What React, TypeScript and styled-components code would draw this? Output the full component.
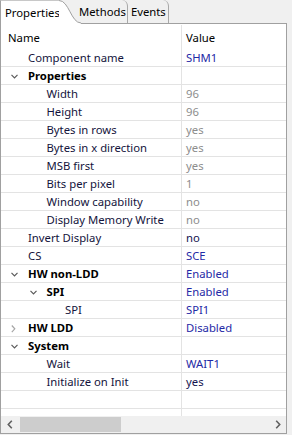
import React from "react";
import styled, { createGlobalStyle } from "styled-components";

const GlobalStyle = createGlobalStyle`
  html, body { margin: 0; padding: 0; background: #f0f0f0; }
  body {
    font-family: "Noto Sans", "Open Sans", sans-serif;
    font-size: 11.3px;
    color: #000;
  }
`;

const Frame = styled.div`
  width: 292px;
  height: 435px;
  display: flex;
  flex-direction: column;
  background: #f0f0f0;
  overflow: hidden;
`;

const TabBar = styled.div`
  display: flex;
  height: 23px;
  align-items: stretch;
  position: relative;
  z-index: 1;
`;

const ActiveTab = styled.div`
  display: flex;
  align-items: stretch;
  height: 24px;
  margin-right: -4px;
`;

const ActiveLabel = styled.div`
  background: #fff;
  padding: 3px 0 0 4px;
  border-left: 1px solid #a0a0a0;
  border-top: 1px solid #c8c8c8;
  box-sizing: border-box;
  width: 59px;
  white-space: nowrap;
  line-height: 17px;
`;

const Wing = styled.svg`
  display: block;
  width: 22px;
  height: 24px;
`;

const Tab = styled.div<{ $pl: number; $pr: number }>`
  padding: 3px ${(p) => p.$pr}px 0 ${(p) => p.$pl}px;
  line-height: 17px;
  height: 23px;
  box-sizing: border-box;
  border-right: 1px solid #a8a8a8;
  border-top-right-radius: 6px;
  white-space: nowrap;
  color: #000;
`;

const Panel = styled.div`
  width: 287px;
  height: 411px;
  box-sizing: border-box;
  border: 1px solid #a0a0a0;
  background: #fff;
  display: flex;
  flex-direction: column;
`;

const Viewport = styled.div`
  flex: 1;
  display: grid;
  grid-template-columns: 181px 1fr;
  grid-auto-rows: 18px;
  grid-template-rows: 25px;
  overflow: hidden;
  align-content: start;
`;

const HeadCell = styled.div<{ $first?: boolean }>`
  display: flex;
  align-items: center;
  padding-left: ${(p) => (p.$first ? 7 : 4)}px;
  border-right: ${(p) => (p.$first ? "1px solid #e3e3e3" : "none")};
  margin-top: 1px;
`;

const NameCell = styled.div<{ $indent: number; $bold?: boolean }>`
  display: flex;
  align-items: center;
  padding-left: ${(p) => p.$indent}px;
  border-right: 1px solid #e3e3e3;
  border-bottom: 1px solid #e3e3e3;
  font-weight: ${(p) => (p.$bold ? 700 : 400)};
  color: ${(p) => (p.$bold ? "#000" : "#14143c")};
  white-space: nowrap;
  overflow: hidden;
`;

const ValueCell = styled.div<{ $tone: "blue" | "gray" | "dark" }>`
  display: flex;
  align-items: center;
  padding-left: 4px;
  border-bottom: 1px solid #e3e3e3;
  white-space: nowrap;
  overflow: hidden;
  color: ${(p) =>
    p.$tone === "blue" ? "#1f2aa6" : p.$tone === "gray" ? "#8d8d8d" : "#141450"};
`;

const Expander = styled.span`
  width: 19px;
  flex: none;
  display: flex;
  align-items: center;
  padding-left: 2px;
  padding-top: 2px;
  box-sizing: border-box;
`;

const FillerCell = styled.div<{ $first?: boolean }>`
  border-right: ${(p) => (p.$first ? "1px solid #e3e3e3" : "none")};
  border-bottom: 1px solid #e3e3e3;
`;

const ScrollBar = styled.div`
  height: 17px;
  display: flex;
  align-items: center;
  background: #f0f0f0;
  flex: none;
`;

const Arrow = styled.div`
  width: 17px;
  height: 17px;
  display: flex;
  align-items: center;
  justify-content: center;
  flex: none;
`;

const Track = styled.div`
  flex: 1;
  height: 17px;
  display: flex;
  align-items: center;
  padding-left: 2px;
`;

const Thumb = styled.div`
  width: 101px;
  height: 15px;
  background: #cdcdcd;
`;

type Tone = "blue" | "gray" | "dark";
type Row = {
  label: string;
  value?: string;
  level: number;
  exp?: "open" | "closed";
  bold?: boolean;
  tone?: Tone;
};

const rows: Row[] = [
  { label: "Component name", value: "SHM1", level: 0, tone: "blue" },
  { label: "Properties", level: 0, exp: "open", bold: true },
  { label: "Width", value: "96", level: 1, tone: "gray" },
  { label: "Height", value: "96", level: 1, tone: "gray" },
  { label: "Bytes in rows", value: "yes", level: 1, tone: "gray" },
  { label: "Bytes in x direction", value: "yes", level: 1, tone: "gray" },
  { label: "MSB first", value: "yes", level: 1, tone: "gray" },
  { label: "Bits per pixel", value: "1", level: 1, tone: "gray" },
  { label: "Window capability", value: "no", level: 1, tone: "gray" },
  { label: "Display Memory Write", value: "no", level: 1, tone: "gray" },
  { label: "Invert Display", value: "no", level: 0, tone: "dark" },
  { label: "CS", value: "SCE", level: 0, tone: "blue" },
  { label: "HW non-LDD", value: "Enabled", level: 0, exp: "open", bold: true, tone: "blue" },
  { label: "SPI", value: "Enabled", level: 1, exp: "open", bold: true, tone: "blue" },
  { label: "SPI", value: "SPI1", level: 2, tone: "blue" },
  { label: "HW LDD", value: "Disabled", level: 0, exp: "closed", bold: true, tone: "blue" },
  { label: "System", level: 0, exp: "open", bold: true },
  { label: "Wait", value: "WAIT1", level: 1, tone: "blue" },
  { label: "Initialize on Init", value: "yes", level: 1, tone: "dark" },
];

const Chevron = ({ open }: { open: boolean }) =>
  open ? (
    <svg width="7" height="5" viewBox="0 0 7 5">
      <polyline points="0.5,0.8 3.5,3.8 6.5,0.8" fill="none" stroke="#5a5a5a" strokeWidth="1.2" />
    </svg>
  ) : (
    <svg width="5" height="8" viewBox="0 0 5 8">
      <polyline points="0.8,0.5 3.8,3.8 0.8,7.2" fill="none" stroke="#a6a6a6" strokeWidth="1.2" />
    </svg>
  );

export default function App() {
  return (
    <Frame>
      <GlobalStyle />
      <TabBar>
        <ActiveTab>
          <ActiveLabel>Properties</ActiveLabel>
          <Wing viewBox="0 0 22 24">
            <path d="M0,0.5 C10,0.5 12,23 22,23 L22,24 L0,24 Z" fill="#fff" />
            <path d="M0,0.5 C10,0.5 12,23 22,23" fill="none" stroke="#a0a0a0" strokeWidth="1" />
          </Wing>
        </ActiveTab>
        <Tab $pl={2} $pr={1}>Methods</Tab>
        <Tab $pl={3} $pr={2}>Events</Tab>
      </TabBar>
      <Panel>
        <Viewport>
          <HeadCell $first>Name</HeadCell>
          <HeadCell>Value</HeadCell>
          {rows.map((r, i) => (
            <React.Fragment key={i}>
              <NameCell $indent={8 + r.level * 18.5} $bold={r.bold}>
                <Expander>{r.exp ? <Chevron open={r.exp === "open"} /> : null}</Expander>
                {r.label}
              </NameCell>
              <ValueCell $tone={r.tone ?? "dark"}>{r.value ?? ""}</ValueCell>
            </React.Fragment>
          ))}
          <FillerCell $first />
          <FillerCell />
          <FillerCell $first />
          <FillerCell />
        </Viewport>
        <ScrollBar>
          <Arrow>
            <svg width="6" height="9" viewBox="0 0 6 9">
              <polyline points="4.8,0.8 1.3,4.5 4.8,8.2" fill="none" stroke="#606060" strokeWidth="1.6" />
            </svg>
          </Arrow>
          <Track>
            <Thumb />
          </Track>
          <Arrow>
            <svg width="6" height="9" viewBox="0 0 6 9">
              <polyline points="1.2,0.8 4.7,4.5 1.2,8.2" fill="none" stroke="#606060" strokeWidth="1.6" />
            </svg>
          </Arrow>
        </ScrollBar>
      </Panel>
    </Frame>
  );
}
